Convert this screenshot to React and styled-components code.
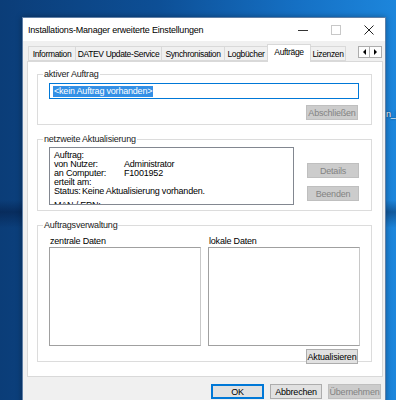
import React from 'react'
import styled, { createGlobalStyle } from 'styled-components'

const GlobalStyle = createGlobalStyle`
  html, body {
    margin: 0;
    padding: 0;
  }
  body {
    font-family: "Liberation Sans", Arial, sans-serif;
    font-size: 9px;
    letter-spacing: -0.2px;
    color: #000;
  }
`

const tabs = [
  { label: 'Information', w: 48 },
  { label: 'DATEV Update-Service', w: 87 },
  { label: 'Synchronisation', w: 64 },
  { label: 'Logbücher', w: 44 },
  { label: 'Aufträge', w: 44, active: true },
  { label: 'Lizenzen', w: 36 },
]

const Arrow = ({ dir }) => (
  <svg width="5" height="6" viewBox="0 0 5 6">
    {dir === 'left' ? <polygon points="4,0 4,6 1,3" fill="#000" /> : <polygon points="1,0 1,6 4,3" fill="#000" />}
  </svg>
)

const App = () => {
  return (
    <Desktop>
      <GlobalStyle />
      <DesktopLabel>n_F</DesktopLabel>

      <Window>
        <TitleBar>
          <Title>Installations-Manager erweiterte Einstellungen</Title>
          <Controls>
            <Control>
              <svg width="10" height="10" viewBox="0 0 10 10">
                <line x1="0" y1="5.5" x2="10" y2="5.5" stroke="#333" strokeWidth="1" />
              </svg>
            </Control>
            <Control>
              <svg width="10" height="10" viewBox="0 0 10 10">
                <rect x="0.5" y="0.5" width="9" height="9" fill="none" stroke="#c8c8c8" strokeWidth="1" />
              </svg>
            </Control>
            <Control>
              <svg width="10" height="10" viewBox="0 0 10 10">
                <path d="M0.5 0.5 L9.5 9.5 M9.5 0.5 L0.5 9.5" stroke="#222" strokeWidth="1" />
              </svg>
            </Control>
          </Controls>
        </TitleBar>

        <Body>
          <TabRow>
            {tabs.map((t) => (
              <Tab key={t.label} $w={t.w} $active={t.active}>
                {t.label}
              </Tab>
            ))}
            <Scroller>
              <ScrollBtn>
                <Arrow dir="left" />
              </ScrollBtn>
              <ScrollBtn>
                <Arrow dir="right" />
              </ScrollBtn>
            </Scroller>
          </TabRow>

          <Panel>
            <Group $h={50}>
              <Legend>aktiver Auftrag</Legend>
              <Input>
                <Selected>&lt;kein Auftrag vorhanden&gt;</Selected>
              </Input>
              <RightRow $top={6}>
                <Button disabled>Abschließen</Button>
              </RightRow>
            </Group>

            <Group $h={71}>
              <Legend>netzweite Aktualisierung</Legend>
              <SplitRow>
                <InfoBox>
                  <InfoLine>Auftrag:</InfoLine>
                  <InfoLine>
                    <InfoKey $w={70}>von Nutzer:</InfoKey>Administrator
                  </InfoLine>
                  <InfoLine>
                    <InfoKey $w={70}>an Computer:</InfoKey>F1001952
                  </InfoLine>
                  <InfoLine>erteilt am:</InfoLine>
                  <InfoLine>
                    <InfoKey $w={28}>Status:</InfoKey>Keine Aktualisierung vorhanden.
                  </InfoLine>
                  <InfoLine $gap={5}>MAN / EPN:</InfoLine>
                </InfoBox>
                <ButtonColumn>
                  <Button disabled>Details</Button>
                  <Button disabled>Beenden</Button>
                </ButtonColumn>
              </SplitRow>
            </Group>

            <Group $h={136}>
              <Legend>Auftragsverwaltung</Legend>
              <ListGrid>
                <ListColumn>
                  <ListLabel>zentrale Daten</ListLabel>
                  <ListBox />
                </ListColumn>
                <ListColumn>
                  <ListLabel>lokale Daten</ListLabel>
                  <ListBox />
                </ListColumn>
              </ListGrid>
              <RightRow $top={3}>
                <Button>Aktualisieren</Button>
              </RightRow>
            </Group>
          </Panel>

          <Footer>
            <Button $default $w={53}>OK</Button>
            <Button $w={52}>Abbrechen</Button>
            <Button disabled $w={53}>Übernehmen</Button>
          </Footer>
        </Body>
      </Window>
    </Desktop>
  )
}

export default App

const Desktop = styled.div`
  position: relative;
  width: 396px;
  height: 400px;
  overflow: hidden;
  box-sizing: border-box;
  padding: 17px 0 0 22px;
  background:
    linear-gradient(180deg, rgba(0, 0, 0, 0) 0%, rgba(0, 0, 0, 0) 50%, rgba(0, 10, 40, 0.35) 53%, rgba(0, 0, 0, 0) 57%),
    linear-gradient(90deg, #0b3d78 0%, #0d4f96 40%, #1570c4 75%, #1d86dc 100%);
`

const DesktopLabel = styled.div`
  position: absolute;
  left: 386px;
  top: 109px;
  color: #fff;
  font-size: 9px;
  text-shadow: 0 0 2px rgba(0, 0, 0, 0.8);
`

const Window = styled.div`
  position: relative;
  z-index: 1;
  width: 364px;
  height: 400px;
  box-sizing: border-box;
  background: #f0f0f0;
  border: 1px solid #5f7fa6;
  box-shadow: 0 0 6px rgba(0, 0, 0, 0.35);
`

const TitleBar = styled.div`
  display: flex;
  align-items: center;
  height: 23px;
  background: #fff;
`

const Title = styled.div`
  flex: 1;
  padding-left: 5px;
  font-size: 9px;
  color: #000;
  white-space: nowrap;
`

const Controls = styled.div`
  display: flex;
  height: 100%;
`

const Control = styled.div`
  width: 33px;
  display: flex;
  align-items: center;
  justify-content: center;
`

const Body = styled.div`
  padding: 3px 2px 0 4px;
`

const TabRow = styled.div`
  display: flex;
  align-items: flex-end;
  height: 17px;
  padding-left: 2px;
`

const Tab = styled.div`
  position: relative;
  box-sizing: border-box;
  width: ${(p) => p.$w}px;
  height: ${(p) => (p.$active ? 18 : 15)}px;
  margin-bottom: ${(p) => (p.$active ? -1 : 0)}px;
  z-index: ${(p) => (p.$active ? 2 : 0)};
  display: flex;
  align-items: center;
  justify-content: center;
  padding-bottom: ${(p) => (p.$active ? 3 : 0)}px;
  background: ${(p) => (p.$active ? '#fff' : '#f0f0f0')};
  border: 1px solid #d9d9d9;
  border-bottom: ${(p) => (p.$active ? 'none' : '1px solid #d9d9d9')};
  margin-left: -1px;
  white-space: nowrap;
  overflow: hidden;
  font-size: 8.5px;
  letter-spacing: -0.35px;
`

const Scroller = styled.div`
  display: flex;
  margin-left: auto;
  margin-right: 1px;
  margin-bottom: 3px;
`

const ScrollBtn = styled.div`
  box-sizing: border-box;
  width: 12px;
  height: 12px;
  display: flex;
  align-items: center;
  justify-content: center;
  background: #fcfcfc;
  border: 1px solid #adadad;
  & + & {
    border-left: none;
  }
`

const Panel = styled.div`
  box-sizing: border-box;
  height: 316px;
  background: #fff;
  border: 1px solid #d9d9d9;
  padding: 7px 10px 0 9px;
  display: flex;
  flex-direction: column;
  gap: 9px;
`

const Group = styled.fieldset`
  box-sizing: border-box;
  margin: 0;
  min-width: 0;
  height: ${(p) => p.$h + 6}px;
  border: 1px solid #dcdcdc;
  padding: 3px 12px 0 11px;
`

const Legend = styled.legend`
  padding: 0 1px;
  margin-left: -6px;
  font-size: 9px;
  line-height: 11px;
  color: #1a1a1a;
`

const Input = styled.div`
  box-sizing: border-box;
  height: 16px;
  border: 1px solid #0078d7;
  padding: 2px 3px;
  display: flex;
  align-items: center;
`

const Selected = styled.span`
  background: #3390e6;
  color: #fff;
  line-height: 11px;
  padding: 0 1px;
`

const RightRow = styled.div`
  display: flex;
  justify-content: flex-end;
  margin-top: ${(p) => p.$top}px;
  margin-right: 1px;
`

const Button = styled.button`
  box-sizing: border-box;
  width: ${(p) => p.$w || 52}px;
  height: 15px;
  padding: 0;
  font-family: inherit;
  font-size: 9px;
  letter-spacing: -0.2px;
  color: ${(p) => (p.disabled ? '#838383' : '#000')};
  background: ${(p) => (p.disabled ? '#cccccc' : '#e1e1e1')};
  border: 1px solid ${(p) => (p.$default ? '#0078d7' : p.disabled ? '#bfbfbf' : '#adadad')};
  box-shadow: ${(p) => (p.$default ? 'inset 0 0 0 1px #0078d7' : 'none')};
`

const SplitRow = styled.div`
  display: flex;
  gap: 13px;
  margin-top: -1px;
`

const InfoBox = styled.div`
  box-sizing: border-box;
  width: 245px;
  height: 58px;
  border: 1px solid #828790;
  padding: 3px 4px 0;
  overflow: hidden;
`

const InfoLine = styled.div`
  display: flex;
  height: 9px;
  line-height: 9px;
  margin-top: ${(p) => p.$gap || 0}px;
  white-space: nowrap;
`

const InfoKey = styled.span`
  display: inline-block;
  width: ${(p) => p.$w}px;
  flex-shrink: 0;
`

const ButtonColumn = styled.div`
  display: flex;
  flex-direction: column;
  gap: 8px;
  margin-top: 16px;
`

const ListGrid = styled.div`
  display: grid;
  grid-template-columns: 152px 152px;
  column-gap: 7px;
  margin-top: 1px;
`

const ListColumn = styled.div`
  display: flex;
  flex-direction: column;
`

const ListLabel = styled.div`
  height: 12px;
  line-height: 12px;
  padding-left: 1px;
`

const ListBox = styled.div`
  box-sizing: border-box;
  height: 99px;
  background: #fff;
  border: 1px solid #a0a0a0;
  border-right-color: #c8c8c8;
`

const Footer = styled.div`
  display: flex;
  justify-content: flex-end;
  gap: 6px;
  margin-top: 7px;
  padding-right: 2px;
`
